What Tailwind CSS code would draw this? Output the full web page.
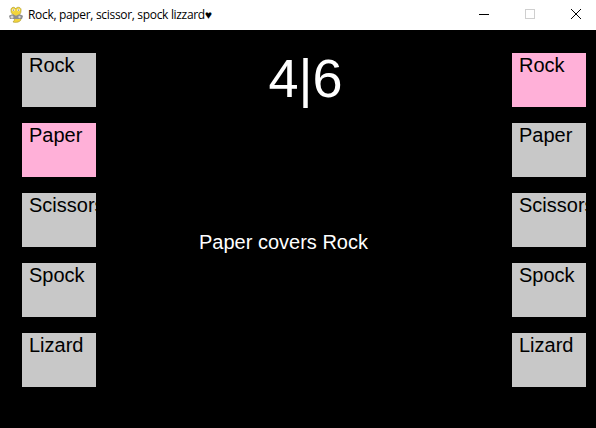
<!DOCTYPE html>
<html lang="en">
<head>
    <meta charset="UTF-8">
    <title>Rock, paper, scissor, spock lizzard</title>
    <script src="https://cdn.jsdelivr.net/npm/@tailwindcss/browser@4"></script>
</head>
<body class="w-[596px] h-[428px] overflow-hidden bg-black font-['Liberation_Sans',sans-serif]">
    <!-- Title bar -->
    <header class="h-[30px] bg-white flex items-center text-black">
        <svg class="ml-[7px] w-[18px] h-[18px]" viewBox="0 0 18 18">
            <path d="M4 5 C3 1 8 0 8.5 3 C10 0 15 1 14 5 C14 7 13 8 12 9 L14 13 C14 16 9 17 6 16 C8 14 8 12 7 9 C5 8 4 7 4 5 Z" fill="#f2d43c" stroke="#a8962c" stroke-width="0.6"/>
            <circle cx="6.5" cy="4" r="1.2" fill="#fff"/>
            <circle cx="11.5" cy="4" r="1.2" fill="#fff"/>
            <circle cx="6.5" cy="4" r="0.5" fill="#333"/>
            <circle cx="11.5" cy="4" r="0.5" fill="#333"/>
            <path d="M2 10 C4 8 7 8 9 10 C11 8 14 8 16 10 L15 13 L3 13 Z" fill="#8e8e8e"/>
            <circle cx="5" cy="11" r="1.5" fill="#d5d5d5"/>
            <circle cx="12.5" cy="11" r="1.2" fill="#d5d5d5"/>
        </svg>
        <span class="ml-[3px] text-[12px] font-['Open_Sans',sans-serif] tracking-[-0.32px] whitespace-nowrap">Rock, paper, scissor, spock lizzard♥</span>
        <div class="ml-auto mr-[-3px] flex items-center h-full">
            <svg class="w-[46px] h-[30px]" viewBox="0 0 46 30"><path d="M18 14.5 H28" stroke="#000"/></svg>
            <svg class="w-[46px] h-[30px]" viewBox="0 0 46 30"><rect x="18.5" y="9.5" width="9" height="9" fill="none" stroke="#cfcfcf"/></svg>
            <svg class="w-[46px] h-[30px]" viewBox="0 0 46 30"><path d="M18 9 L28 19 M28 9 L18 19" stroke="#000"/></svg>
        </div>
    </header>

    <!-- Game -->
    <main class="flex pt-[23px] pl-[22px] pr-[10px]">
        <div class="flex flex-col gap-4 w-[74px] text-[20px] leading-[24px] text-black">
            <div class="h-[54px] pl-[7px] bg-[#c8c8c8] overflow-hidden">Rock</div>
            <div class="h-[54px] pl-[7px] bg-[#ffb0d8] overflow-hidden">Paper</div>
            <div class="h-[54px] pl-[7px] bg-[#c8c8c8] overflow-hidden">Scissors</div>
            <div class="h-[54px] pl-[7px] bg-[#c8c8c8] overflow-hidden">Spock</div>
            <div class="h-[54px] pl-[7px] bg-[#c8c8c8] overflow-hidden">Lizard</div>
        </div>

        <div class="w-[416px] flex flex-col items-center text-white">
            <div class="text-[54px] leading-[55px] mt-[-2px] pl-[3px]">4|6</div>
            <div class="mt-[125px] mr-[41px] text-[20px] leading-[23px]">Paper covers Rock</div>
        </div>

        <div class="flex flex-col gap-4 w-[74px] text-[20px] leading-[24px] text-black">
            <div class="h-[54px] pl-[7px] bg-[#ffb0d8] overflow-hidden">Rock</div>
            <div class="h-[54px] pl-[7px] bg-[#c8c8c8] overflow-hidden">Paper</div>
            <div class="h-[54px] pl-[7px] bg-[#c8c8c8] overflow-hidden">Scissors</div>
            <div class="h-[54px] pl-[7px] bg-[#c8c8c8] overflow-hidden">Spock</div>
            <div class="h-[54px] pl-[7px] bg-[#c8c8c8] overflow-hidden">Lizard</div>
        </div>
    </main>
</body>
</html>
